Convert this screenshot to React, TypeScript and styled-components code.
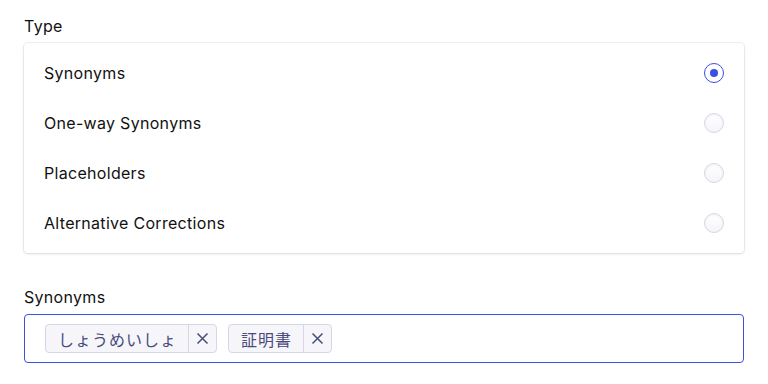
import React, { useState } from "react";
import styled, { createGlobalStyle } from "styled-components";

const GlobalStyle = createGlobalStyle`
  body {
    margin: 0;
    background: #ffffff;
    font-family: Inter, "Noto Sans CJK JP", sans-serif;
    color: #111111;
  }
`;

const Page = styled.div`
  padding: 14px 24px 0 24px;
  width: 720px;
  display: flex;
  flex-direction: column;
`;

const FieldLabel = styled.div`
  font-size: 16px;
  line-height: 24px;
  letter-spacing: 0.3px;
  margin-bottom: 5px;
`;

const Card = styled.div`
  background: #fff;
  border-radius: 4px;
  box-shadow: 0 0 0 1px rgba(35, 38, 59, 0.06), 0 1px 3px 0 rgba(35, 38, 59, 0.12);
  padding: 5px 0;
  margin-bottom: 32px;
`;

const OptionRow = styled.label`
  display: flex;
  align-items: center;
  justify-content: space-between;
  height: 50px;
  padding: 0 20px;
  font-size: 16px;
  letter-spacing: 0.3px;
  cursor: pointer;
`;

const Radio = styled.span<{ $checked: boolean }>`
  width: 20px;
  height: 20px;
  box-sizing: border-box;
  border-radius: 50%;
  display: flex;
  align-items: center;
  justify-content: center;
  border: 1px solid ${(p) => (p.$checked ? "#3c4fe0" : "#d6d6e7")};
  background: ${(p) => (p.$checked ? "#fff" : "linear-gradient(180deg, #fff 0%, #f5f5fa 100%)")};
  box-shadow: ${(p) => (p.$checked ? "none" : "inset 0 1px 2px rgba(35, 38, 59, 0.08)")};

  &::after {
    content: "";
    display: ${(p) => (p.$checked ? "block" : "none")};
    width: 8px;
    height: 8px;
    border-radius: 50%;
    background: #3c4fe0;
  }
`;

const TagInput = styled.div`
  box-sizing: border-box;
  height: 49px;
  border: 1px solid #3c4fe0;
  border-radius: 4px;
  display: flex;
  align-items: center;
  gap: 11px;
  padding: 0 20px;
`;

const Tag = styled.span`
  display: inline-flex;
  align-items: stretch;
  height: 29px;
  box-sizing: border-box;
  border: 1px solid #d6d6e7;
  border-radius: 4px;
  background: #f5f5fa;
  color: #484c7a;
  font-size: 16px;
`;

const TagText = styled.span`
  display: flex;
  align-items: center;
  padding: 0 11px 0 12px;
  letter-spacing: 1px;
`;

const TagRemove = styled.button`
  display: flex;
  align-items: center;
  justify-content: center;
  width: 28px;
  padding: 0;
  border: none;
  border-left: 1px solid #d6d6e7;
  background: transparent;
  color: #484c7a;
  cursor: pointer;
`;

const options = ["Synonyms", "One-way Synonyms", "Placeholders", "Alternative Corrections"];

const App: React.FC = () => {
  const [selected, setSelected] = useState(0);
  const [tags, setTags] = useState(["しょうめいしょ", "証明書"]);

  return (
    <Page>
      <GlobalStyle />
      <FieldLabel>Type</FieldLabel>
      <Card>
        {options.map((opt, i) => (
          <OptionRow key={opt} onClick={() => setSelected(i)}>
            {opt}
            <Radio $checked={selected === i} />
          </OptionRow>
        ))}
      </Card>
      <FieldLabel>Synonyms</FieldLabel>
      <TagInput>
        {tags.map((t) => (
          <Tag key={t}>
            <TagText>{t}</TagText>
            <TagRemove onClick={() => setTags(tags.filter((x) => x !== t))}>
              <svg width="13" height="13" viewBox="0 0 13 13">
                <path d="M1.5 1.5 L11.5 11.5 M11.5 1.5 L1.5 11.5" stroke="currentColor" strokeWidth="1.5" fill="none" />
              </svg>
            </TagRemove>
          </Tag>
        ))}
      </TagInput>
    </Page>
  );
};

export default App;
